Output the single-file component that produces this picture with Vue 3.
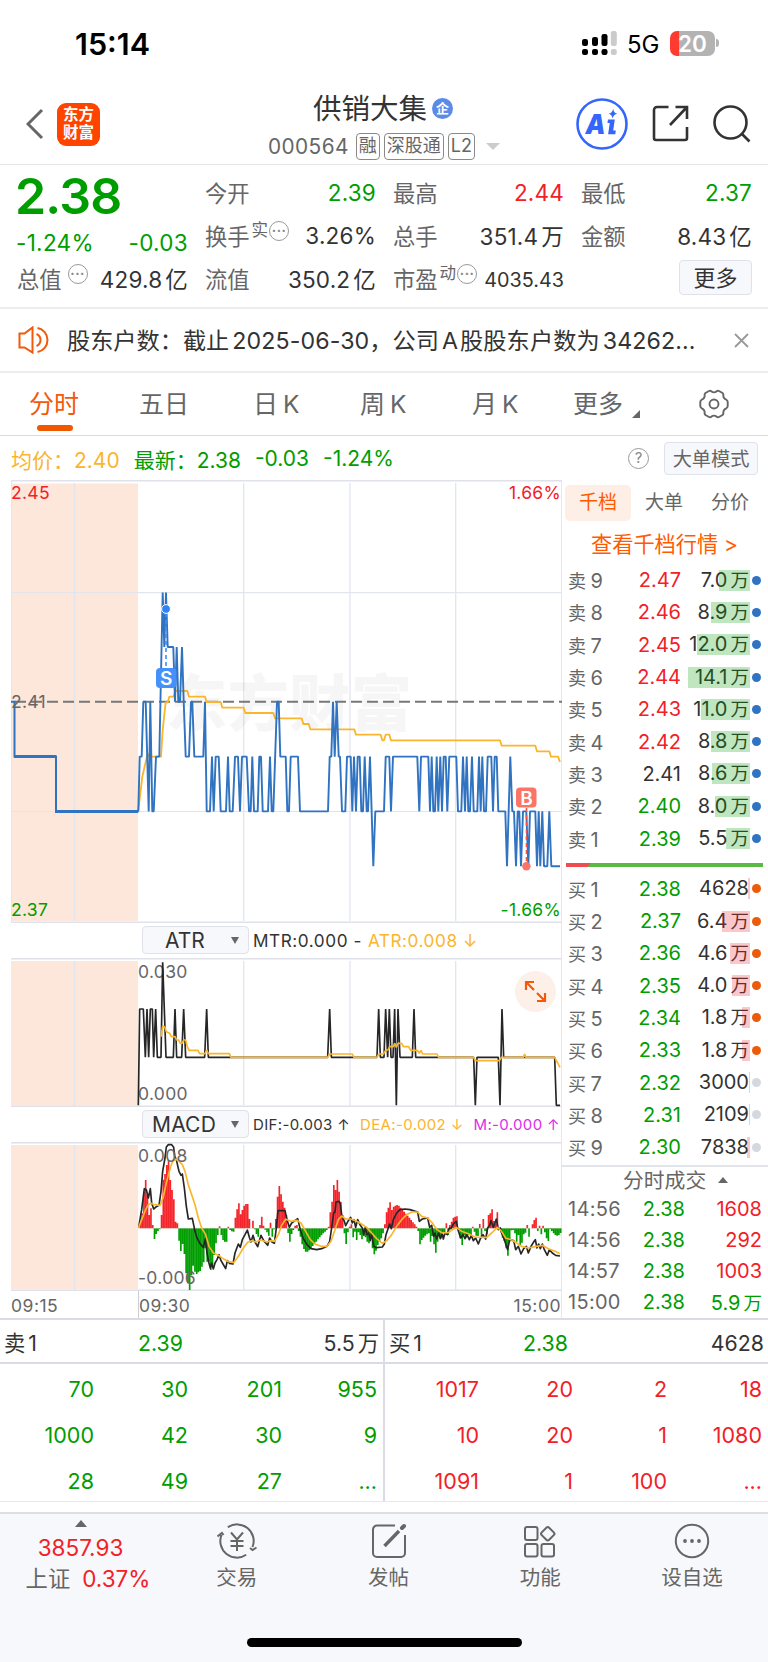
<script setup>
const sells = [
  [9, '2.47', 'r', '7.0', 31], [8, '2.46', 'r', '8.9', 39], [7, '2.45', 'r', '12.0', 53],
  [6, '2.44', 'r', '14.1', 62], [5, '2.43', 'r', '11.0', 49], [4, '2.42', 'r', '8.8', 39],
  [3, '2.41', 'k', '8.6', 38], [2, '2.40', 'g', '8.0', 35], [1, '2.39', 'g', '5.5', 24],
]
const buys = [
  [1, '2.38', '4628', 0, 2, 1], [2, '2.37', '6.4', 1, 28, 1], [3, '2.36', '4.6', 1, 20, 1],
  [4, '2.35', '4.0', 1, 18, 1], [5, '2.34', '1.8', 1, 8, 1], [6, '2.33', '1.8', 1, 8, 1],
  [7, '2.32', '3000', 0, 1, 0], [8, '2.31', '2109', 0, 1, 0], [9, '2.30', '7838', 0, 3, 0],
]
const trades = [['14:56', '1608'], ['14:56', '292'], ['14:57', '1003']]
const sellOrders = ['70', '30', '201', '955', '1000', '42', '30', '9', '28', '49', '27', '...']
const buyOrders = ['1017', '20', '2', '18', '10', '20', '1', '1080', '1091', '1', '100', '...']

const levels = [592.5, 647, 701.8, 756.6, 811.4, 866.2]
const scaleX = (s, origin) => s.split(' ').map((p) => {
  const [x, l] = p.split(':').map(Number)
  return `${(origin + x / 3).toFixed(1)},${levels[l]}`
}).join(' ')
const priceA = scaleX('415:4 419:3 425:3 430:2 437:2 446:4 451:2 457:4 461:4 468:3 478:3 488:0 493:1 498:0 503:1 520:1 525:2 530:1 535:2 540:2 546:1 551:2 557:3 567:3 573:2 577:2 583:3 610:3 615:2 620:4 630:4 636:3 641:4 647:3 656:3 662:4 678:4 684:3 689:4 698:4 705:3 714:3 720:4 726:3 740:3 747:4 752:4 757:3 762:4 773:4 778:3 783:3 788:4 804:4 810:3 815:4 820:4 831:2 836:2', 0)
const priceB = scaleX('1:3 17:3 22:4 27:4 32:3 54:3 60:4 144:4 149:3 154:3 159:2 164:3 170:2 176:3 180:3 186:4 196:4 201:3 212:3 217:4 222:3 228:4 233:3 239:3 244:4 249:4 254:3 260:4 264:4 270:3 280:5 286:4 312:4 317:3 328:3 333:4 339:3 412:3 418:4 423:3 445:3 450:4 455:3 460:4 465:4 470:3 475:4 481:3 486:4 491:3 497:3 502:4 508:3 529:3 534:4 544:4 549:3 555:4 560:3 565:4 570:4 576:3 581:4 592:4 597:3 602:4 607:3 612:4 618:4 623:3 634:3 639:4 644:3 650:3 655:4 676:4 681:5 691:3 697:4 702:4 708:5 713:4 718:4 723:5 729:4 739:4 745:5 750:4 766:4 771:5 776:4 781:5 787:4 792:5 802:5 808:4 814:5 840:5', 280)
const price = priceA + ' ' + priceB

const bars = [0, 20, 45, 110, 145, 100, 40, 60, 10, -32, -17, -8, -3, 40, 146, 163, 190, 205, 145, 115, 87, 20, 15, -37, -68, -47, -77, -135, -165, -185, -140, -112, -130, -137, -132, -128, -115, -102, -60, -100, -100, -125, -110, -80, -45, -20, 6, -20, -35, -40, -40, 5, -5, -9, -10, 32, 57, 75, 42, 55, 68, 73, 73, 28, 0, 23, -3, -17, -25, 10, 35, 8, -4, -12, -22, 17, -25, -3, 28, 95, 127, 102, 80, 62, 40, -14, -40, -17, -5, 8, 10, -8, -25, -48, -62, -70, -70, -66, -60, -53, -47, -40, -33, -27, -21, -15, -10, -5, 5, 48, 80, 130, 115, 145, 110, 80, 40, -15, -47, -12, 5, 12, -27, -10, -35, -12, -20, -33, -23, -27, -40, -45, -30, -60, -78, -67, -50, -40, -30, -15, 12, 48, 62, 78, 55, 65, 68, 70, 68, 62, 58, 50, 44, 38, 32, 25, 18, 12, 5, -8, -48, -35, -28, -22, -18, -15, -40, -23, -48, -73, -40, -20, -30, -12, -12, 15, -20, 10, 20, 32, 35, 36, -8, -30, -50, -20, -30, -20, -20, -28, 5, -10, -22, -23, 13, -23, 28, -8, -18, 40, 45, 57, 22, 15, 48, -5, -12, -28, -38, -60, -82, -40, -6, -5, -15, -40, -20, -50, -43, -18, -13, 10, -25, 0, 12, 25, 32, -8, 8, -18, 8, -12, -30, -38, -3, -8, -15, -20, -22, -20, -14]
const barPath = (sign) => bars.map((h, i) => (h * sign > 0 ? `M${(11 + 5.275 * i).toFixed(1)} 271v${-h}` : '')).join('')
const redBars = barPath(1)
const greenBars = barPath(-1)
</script>

<template>
  <div class="page">
    <div class="status">
      <div class="clock">15:14</div>
      <svg class="signal" width="35" height="24" viewBox="0 0 35 24">
        <g fill="#000">
          <rect x="0" y="8" width="6" height="7" rx="2.2" /><rect x="10" y="6" width="6" height="9" rx="2.2" /><rect x="19.500" y="3" width="6" height="12" rx="2.2" />
          <rect x="0" y="18" width="6" height="6" rx="2.2" /><rect x="10" y="18" width="6" height="6" rx="2.200" /><rect x="19.500" y="18" width="6" height="6" rx="2.200" />
        </g>
        <g fill="#cbcbcb"><rect x="28.800" y="0" width="6" height="15" rx="2.200" /><rect x="28.800" y="18" width="6" height="6" rx="2.200" /></g>
      </svg>
      <div class="net">5G</div>
      <div class="battery"><span>20</span></div>
      <div class="nub"></div>
    </div>

    <header class="header">
      <div class="hleft">
        <svg width="18" height="32" viewBox="0 0 18 32"><path d="M16 2 2 16l14 14" fill="none" stroke="#666" stroke-width="3" /></svg>
        <div class="logo"><span>东方</span><span>财富</span></div>
      </div>
      <div class="hmid">
        <div class="title">供销大集<span class="ent">企</span></div>
        <div class="code"><span class="num">000564</span><span class="tag">融</span><span class="tag">深股通</span><span class="tag">L2</span>
          <svg width="14" height="7"><path d="M0 0h14l-7 7z" fill="#ccc" /></svg>
        </div>
      </div>
      <div class="hright">
        <svg width="52" height="52" viewBox="0 0 52 52">
          <circle cx="26" cy="26" r="24.500" fill="none" stroke="#3566fb" stroke-width="2.600" />
          <text x="9.500" y="35.500" font-size="27" class="ai" textLength="20" lengthAdjust="spacingAndGlyphs">A</text>
          <path d="M32 21.500h6.800l-1.600 11h2.600l-.5 3.700h-7.200l1.700-11.200h-2.400z" fill="#3566fb" />
          <path d="M37.200 10.800q.6 4.500 4.200 5-3.900.6-4.900 4.800-.4-4.200-4.100-4.800 3.900-.6 4.800-5z" fill="#3566fb" />
        </svg>
        <svg width="38" height="38" viewBox="0 0 38 38" fill="none" stroke="#333" stroke-width="2.600"><path d="M16.500 2H5a3 3 0 0 0-3 3v28a2 2 0 0 0 2 2h29a2 2 0 0 0 2-2V22M23.500 2H35v12M35 2 18 20" /></svg>
        <svg width="38" height="38" viewBox="0 0 38 38" fill="none" stroke="#333" stroke-width="2.600"><circle cx="17.500" cy="17.500" r="16" /><path d="m28.500 28.500 8 8" /></svg>
      </div>
    </header>

    <section class="stats">
      <div class="big">
        <div class="last">2.38</div>
        <div class="pair g"><span>-1.24%</span><span>-0.03</span></div>
        <div class="cell row3"><label>总值<b class="dots">···</b></label><span>429.8<i>亿</i></span></div>
      </div>
      <div class="grid">
        <div class="cell"><label>今开</label><span class="g">2.39</span></div>
        <div class="cell"><label>最高</label><span class="r">2.44</span></div>
        <div class="cell"><label>最低</label><span class="g">2.37</span></div>
        <div class="cell"><label>换手<sup>实</sup><b class="dots near">···</b></label><span>3.26%</span></div>
        <div class="cell"><label>总手</label><span>351.4<i>万</i></span></div>
        <div class="cell"><label>金额</label><span>8.43<i>亿</i></span></div>
        <div class="cell"><label>流值</label><span>350.2<i>亿</i></span></div>
        <div class="cell"><label>市盈<sup>动</sup><b class="dots near">···</b></label><span class="small">4035.43</span></div>
        <div class="cell end"><button class="more">更多</button></div>
      </div>
    </section>

    <section class="notice">
      <svg width="32" height="28" viewBox="0 0 32 28" fill="none" stroke="#f3590a" stroke-width="2"><path d="M1.500 7.500h5L14.500 1.500v25l-8-5h-5zM18.500 8a6.500 6.500 0 0 1 0 12M19.500 2a12.200 12.200 0 0 1 0 24" /></svg>
      <p>股东户数：截止<i>2025-06-30</i>，公司<i>A</i><i class="cn">股股东户数为</i><i>34262...</i></p>
      <svg width="15" height="15" viewBox="0 0 15 15"><path d="m1 1 13 13M14 1 1 14" stroke="#999" stroke-width="1.800" /></svg>
    </section>

    <nav class="tabs">
      <span class="on">分时</span><span>五日</span><span>日<i>K</i></span><span>周<i>K</i></span><span>月<i>K</i></span>
      <span class="mt">更多<svg width="8" height="8"><path d="M8 0v8H0z" fill="#666" /></svg></span>
      <svg class="gear" width="30" height="30" viewBox="0 0 30 30" fill="none" stroke="#666" stroke-width="1.900"><path d="M10 2q1.500-.8 2.500.5 2.500 1.800 5 0 1-1.300 2.500-.5l3.500 2q1.200 1 .8 2.700.2 3 3 4 1.400.8 1.400 2.300v4q0 1.500-1.400 2.300-2.800 1-3 4 .4 1.700-.8 2.700l-3.500 2q-1.500.8-2.500-.5-2.500-1.800-5 0-1 1.300-2.500.5l-3.500-2q-1.200-1-.8-2.700-.2-3-3-4Q1.300 18.500 1.300 17v-4q0-1.500 1.400-2.300 2.800-1 3-4Q5.300 5 6.500 4z" /><circle cx="15" cy="15" r="4.500" /></svg>
    </nav>

    <div class="info">
      <span class="y">均价：2.40</span><span class="g">最新：2.38</span><span class="g">-0.03</span><span class="g">-1.24%</span>
      <span class="q">?</span><button>大单模式</button>
    </div>

    <main class="body">
      <div class="charts">
        <svg class="chart" width="551" height="443" viewBox="11 480 551 443">
          <path d="M11 483.500h127v437.500H11z" fill="#fce7da" />
          <g stroke="#e1e5ee" fill="none"><path d="M11 592.700h551M11 811.500h551" stroke-width="1.200" /><path d="M74.500 483v438M243.700 483v438M350 483v438M455.700 483v438" stroke-width="1.300" /><path d="M11.500 923V481" /></g>
          <text x="166" y="726" class="wm" textLength="246">东方财富</text>
          <path d="M11 701.800h551" stroke="#777" stroke-width="2" stroke-dasharray="11 5" stroke-dashoffset="-4" />
          <g transform="translate(0 480) scale(.33333)" fill="none" stroke="#fbb52d" stroke-width="5.500" stroke-linejoin="round">
            <path d="M415 990 427 890 443 820 447 830H483L488 750 497 667H503L508 650H520L527 633H562L567 650H615L620 666H662L667 683H731L736 699H820L825 715H905L910 732H926L931 748H1063L1068 764H1142L1147 781H1152L1157 764H1168L1173 781H1500L1505 797H1606L1611 814H1648L1653 830H1674L1680 846" />
          </g>
          <path d="M11 701.800h3.500v54.800H56v54.800h82.500" fill="none" stroke="#2f73c1" stroke-width="2" />
          <path d="M14 756.600h42M55 811.400h83" stroke="#2f73c1" stroke-width="3" />
          <polyline :points="price" fill="none" stroke="#2f73c1" stroke-width="1.900" stroke-linejoin="bevel" />
          <path d="M166 613v55" stroke="#3d8bff" stroke-width="1.600" stroke-dasharray="4 3" />
          <circle cx="166" cy="609" r="4.400" fill="#2f83f5" stroke="#fff" />
          <rect x="156" y="668" width="20.500" height="20" rx="4" fill="#4690fc" />
          <text x="166.200" y="685" class="mark">S</text>
          <path d="M526.500 808v56" stroke="#f25548" stroke-width="1.600" stroke-dasharray="4 3" />
          <circle cx="526.400" cy="866.300" r="4.200" fill="#fc7467" />
          <rect x="516" y="787.500" width="20.500" height="20" rx="4" fill="#fc7467" />
          <text x="526.400" y="804.500" class="mark">B</text>
          <g class="axis"><text x="11" y="498.500" fill="#f22027">2.45</text><text x="11" y="707.500">2.41</text><text x="11" y="916" fill="#009d00">2.37</text><text x="561" y="498.500" fill="#f22027" text-anchor="end">1.66%</text><text x="561" y="916" fill="#009d00" text-anchor="end">-1.66%</text></g>
        </svg>
        <div class="ind"><div class="drop"><span>ATR</span><u></u></div><span class="i1">MTR:0.000 -</span><span class="i1 y">ATR:0.008 ↓</span></div>
        <svg class="chart" width="551" height="149" viewBox="11 958 551 149">
          <path d="M11 961h127v145H11z" fill="#fce7da" />
          <path d="M74.500 961v145M243.700 961v145M350 961v145M455.700 961v145" stroke="#e1e5ee" stroke-width="1.300" />
          <g class="axis"><text x="138" y="978">0.030</text><text x="138" y="1100">0.000</text></g>
          <g transform="translate(0 920) scale(.33333)" fill="none" stroke-width="5" stroke-linejoin="bevel">
            <path stroke="#262626" d="M415 556 419 267H430L436 412 441 267 446 412 451 267H457L461 412 467 267 472 412H483L488 127 498 412H520L525 267 530 412H545L551 267 557 412H614L620 267 625 412H983L989 267 994 412H1131L1136 267 1141 412H1152L1157 267 1163 412 1168 267 1173 412H1179L1184 267 1189 556 1194 267 1200 412H1237L1242 267 1247 412H1421L1426 556 1431 412H1495L1500 556 1506 267 1511 412H1664L1669 556H1680" />
            <path stroke="#fbb52d" d="M483 350 488 318 494 320 499 335 509 340 514 350H525L530 360H536L541 370H546L551 360H557L562 380 567 391H594L599 401H615L620 390 625 401H688L693 412H983L989 402H1057L1062 412H1131L1136 402H1150L1158 390H1164L1169 380H1180L1184 370 1189 382 1194 370H1205L1210 380H1226L1232 391H1252L1258 400 1263 391 1268 402H1311L1316 412H1421L1426 422H1498L1504 412H1570L1574 402 1578 412H1664L1680 442" />
          </g>
          <circle cx="535.500" cy="991.500" r="20.500" fill="#fdf0e9" />
          <path d="M526 990v-8h8M526.500 982.500l7.500 7.500M545 993v8h-8M544.500 1000.500l-7.500-7.500" fill="none" stroke="#f3590a" stroke-width="2.200" />
        </svg>
        <div class="ind"><div class="drop"><span class="wide">MACD</span><u></u></div><span class="i2">DIF:-0.003 ↑</span><span class="i2 y">DEA:-0.002 ↓</span><span class="i2 p">M:-0.000 ↑</span></div>
        <svg class="chart" width="551" height="149" viewBox="11 1142 551 149">
          <path d="M11 1145h127v144.500H11z" fill="#fce7da" />
          <path d="M74.500 1145v145M243.700 1145v145M350 1145v145M455.700 1145v145" stroke="#e1e5ee" stroke-width="1.300" />
          <g transform="translate(135 1138) scale(.33333)" fill="none" stroke-width="5" stroke-linejoin="round">
            <path :d="redBars" stroke="#f3252a" /><path :d="greenBars" stroke="#009d00" />
            <path d="M11 271H1278" stroke="#c8b9a8" stroke-width="1" />
            <path stroke="#262626" d="M11 268 20 215 28 152 34 155 40 180 46 152 50 195 56 213 64 206 72 202 78 160 83 100 90 60 94 27 100 20 110 20 116 28 119 55 124 65 132 100 138 112 142 108 148 150 154 205 160 243 172 241 180 280 186 300 196 318 205 328 211 303 216 345 221 372 226 390 230 375 235 393 240 375 246 365 252 350 258 368 264 378 272 392 277 368 284 376 294 378 300 345 310 318 316 328 322 305 330 290 337 276 343 298 348 312 354 292 360 312 368 326 373 308 378 292 386 308 398 322 404 300 411 312 418 316 424 270 429 218 450 218 456 245 463 268 470 255 488 242 496 275 504 300 516 320 528 332 545 335 560 332 576 325 584 310 592 255 596 225 600 222 603 192 612 190 616 198 620 230 628 250 632 263 640 248 647 238 652 255 657 245 662 268 668 245 676 262 682 270 686 290 691 268 696 290 701 285 706 308 710 285 716 325 724 329 742 327 748 318 753 290 764 258 769 272 775 245 785 225 795 215 810 213 825 215 848 222 853 250 862 243 878 240 884 268 890 262 896 295 900 285 905 303 911 285 916 302 921 285 925 303 930 285 937 290 943 270 948 272 955 258 964 250 969 275 977 300 984 290 990 302 996 290 1003 305 1009 292 1015 308 1022 300 1030 318 1036 302 1044 290 1052 303 1058 270 1064 262 1068 248 1075 268 1084 243 1090 275 1096 270 1101 288 1108 305 1118 335 1124 305 1136 308 1142 335 1150 325 1158 348 1166 332 1174 325 1180 345 1188 325 1196 312 1201 305 1206 330 1211 318 1216 332 1222 318 1228 335 1237 352 1243 335 1252 345 1262 352 1275 354" />
            <path stroke="#fbb52d" d="M11 268 22 240 32 215 40 200 48 196 58 200 75 202 84 180 94 135 104 95 112 72 122 63 132 70 142 80 150 100 160 140 170 170 180 200 190 240 200 270 212 290 222 325 235 345 250 352 265 362 278 370 296 374 310 355 325 330 338 313 350 308 362 312 378 306 395 312 408 308 418 310 430 290 440 262 452 244 468 250 485 247 498 255 512 280 526 305 540 318 558 325 576 325 588 310 600 275 610 245 620 234 632 243 648 243 665 250 680 258 695 268 710 285 725 302 742 316 755 308 770 290 785 265 800 245 815 230 830 222 848 222 860 235 878 240 892 255 906 275 922 285 940 284 952 275 964 268 980 280 1000 287 1020 297 1045 298 1055 298 1070 285 1087 268 1098 278 1112 300 1130 306 1145 315 1160 325 1180 330 1200 326 1222 322 1240 332 1260 340 1275 347" />
          </g>
          <g class="axis"><text x="138" y="1162">0.008</text><text x="138" y="1284">-0.006</text></g>
        </svg>
        <div class="times"><span>09:15</span><span class="t2">09:30</span><span class="t3">15:00</span></div>
      </div>

      <aside class="side">
        <div class="stabs"><span class="on">千档</span><span>大单</span><span>分价</span></div>
        <div class="look">查看千档行情 <em>&gt;</em></div>
        <div v-for="s in sells" :key="'s' + s[0]" class="lv">
          <span class="nm">卖<i>{{ s[0] }}</i></span><span class="pr" :class="s[2]">{{ s[1] }}</span>
          <span class="qt">{{ s[3] }}<i>万</i><b class="fill gf" :style="{ width: s[4] + 'px' }"></b></span><span class="dot blue"></span>
        </div>
        <div class="ratio"><svg width="197" height="4"><path d="M0 0h197v4H0z" fill="#5bba45" /><path d="M0 0h25l-3.500 4H0z" fill="#ee4c50" /></svg></div>
        <div v-for="b in buys" :key="'b' + b[0]" class="lv">
          <span class="nm">买<i>{{ b[0] }}</i></span><span class="pr g">{{ b[1] }}</span>
          <span class="qt">{{ b[2] }}<i v-if="b[3]">万</i><b class="fill rf" :style="{ width: b[4] + 'px' }"></b></span><span class="dot" :class="b[5] ? 'orange' : 'grey'"></span>
        </div>
        <div class="deals">
          <div class="dh">分时成交<svg width="10" height="6"><path d="M0 6h10L5 0z" fill="#666" /></svg></div>
          <div v-for="(t, i) in trades" :key="i" class="tr"><span>{{ t[0] }}</span><span class="g">2.38</span><span class="r">{{ t[1] }}</span></div>
          <div class="tr"><span>15:00</span><span class="g">2.38</span><span class="g">5.9<i>万</i></span></div>
        </div>
      </aside>
    </main>

    <section class="orders">
      <div class="half">
        <div class="oh"><span>卖<i>1</i></span><span class="g">2.39</span><span>5.5<i>万</i></span></div>
        <div class="og g"><span v-for="(o, i) in sellOrders" :key="i">{{ o }}</span></div>
      </div>
      <div class="half right">
        <div class="oh"><span>买<i>1</i></span><span class="g">2.38</span><span>4628</span></div>
        <div class="og r"><span v-for="(o, i) in buyOrders" :key="i">{{ o }}</span></div>
      </div>
    </section>

    <footer class="foot">
      <div class="index">
        <svg width="12" height="7"><path d="M0 7h12L6 0z" fill="#666" /></svg>
        <div class="r v">3857.93</div>
        <div class="c">上证<span class="r">0.37%</span></div>
      </div>
      <div class="act">
        <svg width="40" height="36" viewBox="0 0 40 36" fill="none" stroke="#666" stroke-width="2"><path d="M10.800 4.300A16.500 16.500 0 0 1 35.500 24M29.200 31.700A16.500 16.500 0 0 1 4.500 12M.500 13.500 5 10l1.500 2M39.500 24.500l-4 2.500-2.500-2M14 9.500l6 7 6-7M20 16.500v11.500M13.500 18h13M13.500 23h13" /></svg>交易
      </div>
      <div class="act">
        <svg width="36" height="36" viewBox="0 0 36 36" fill="none" stroke="#666" stroke-width="2"><path d="M24 2.500H6a4 4 0 0 0-4 4V30a4 4 0 0 0 4 4h24a4 4 0 0 0 4-4V12" /><path d="M13.500 23 28 8" stroke-width="3.400" /><path d="m31 5 2-2" stroke-width="4" stroke-linecap="round" /></svg>发帖
      </div>
      <div class="act">
        <svg width="36" height="36" viewBox="0 0 36 36" fill="none" stroke="#666" stroke-width="2"><rect x="3" y="4" width="12.500" height="13" rx="2" /><rect x="3" y="21" width="12.500" height="12.500" rx="2" /><rect x="19.500" y="21" width="12.500" height="12.500" rx="2" /><rect x="20.500" y="5.500" width="10.500" height="10.500" rx="2" transform="rotate(45 25.750 10.750)" /></svg>功能
      </div>
      <div class="act">
        <svg width="36" height="36" viewBox="0 0 36 36"><circle cx="18" cy="18" r="16.200" fill="none" stroke="#666" stroke-width="2" /><g fill="#666"><circle cx="11" cy="18" r="1.900" /><circle cx="18" cy="18" r="1.900" /><circle cx="25" cy="18" r="1.900" /></g></svg>设自选
      </div>
      <div class="home"></div>
    </footer>
  </div>
</template>

<style>
body { background: #fff; }
</style>
<style scoped>
* { box-sizing: border-box; }
.page { width: 768px; height: 1662px; overflow: hidden; background: #fff; color: #333; font-family: Inter, "Noto Sans CJK SC", sans-serif; display: flex; flex-direction: column; white-space: nowrap; }
i { font-style: normal; margin-left: 3px; }
svg { display: block; flex: none; }
button { font-family: inherit; background: #f7f8fb; border: 1px solid #dfe2ea; border-radius: 4px; padding: 0; }
.r { color: #f22027; } .g { color: #009d00; } .k { color: #333; } .y { color: #fbb52d; } .p { color: #e02be8; }

.status { height: 86px; display: flex; align-items: center; padding-left: 75px; }
.clock { font-size: 30.5px; font-weight: 600; color: #000; width: 507px; padding-top: 2px; }
.signal { margin-top: 1px; }
.net { font-size: 24px; color: #000; margin-left: 10px; width: 43px; padding-top: 3px; }
.battery { width: 45px; height: 25px; border-radius: 7px; background: linear-gradient(90deg, #ff3b30 9px, #b3b3b3 9px); color: #fff; font-size: 22.500px; font-weight: 600; line-height: 25px; text-align: center; margin-top: 1px; }
.nub { width: 3px; height: 8px; background: #b3b3b3; border-radius: 0 3px 3px 0; margin-left: 1px; }

.header { height: 79px; border-bottom: 1px solid #e6e6e6; display: grid; grid-template-columns: 1fr auto 1fr; }
.hleft { display: flex; align-items: center; padding: 0 0 1px 26px; }
.logo { margin-left: 13px; width: 43px; height: 43px; border-radius: 9px; background: #ff4400; color: #fff; font-size: 15.5px; font-weight: 700; line-height: 18px; display: flex; flex-direction: column; align-items: center; justify-content: center; }
.hmid { display: flex; flex-direction: column; align-items: center; padding-top: 1px; }
.title { height: 44px; line-height: 44px; font-size: 28.5px; display: flex; align-items: center; position: relative; left: -1px; }
.ent { width: 21px; height: 21px; border-radius: 50%; background: #5b8ae8; color: #fff; font-size: 13px; font-weight: 700; line-height: 20px; text-align: center; margin-left: 5px; }
.code { display: flex; align-items: center; height: 32px; color: #666; }
.num { font-size: 20.8px; letter-spacing: .4px; margin-right: 7px; }
.tag { border: 1.500px solid #8a8a8a; border-radius: 4px; height: 27px; line-height: 24px; font-size: 18px; padding: 0 2px; margin-right: 4px; }
.code svg { margin-left: 7px; }
.hright { display: flex; align-items: center; justify-content: flex-end; padding: 0 17px 1px 0; gap: 24px; }
.hright svg:last-child { margin-left: -1px; }
.ai { font-family: Inter, sans-serif; font-weight: 900; font-style: italic; fill: #3566fb; }

.stats { height: 145px; border-bottom: 2px solid #ececee; display: flex; padding: 6px 15px 0 17px; }
.big { width: 171px; margin-right: 17px; }
.last { font-size: 50px; font-weight: 600; color: #009d00; height: 52px; line-height: 51px; letter-spacing: -.8px; margin-left: -2px; }
.pair { display: flex; justify-content: space-between; font-size: 22.500px; height: 35px; line-height: 40px; letter-spacing: .3px; margin-left: -1px; }
.grid { flex: 1; display: grid; grid-template-columns: repeat(3, 171px); column-gap: 17px; grid-auto-rows: 43px; }
.cell { display: flex; justify-content: space-between; align-items: center; height: 43px; font-size: 22.5px; }
.cell.row3 { margin-top: -1px; }
.cell span { letter-spacing: .2px; }
.cell label { color: #666; font-size: 22.3px; display: flex; align-items: center; }
.cell sup { font-size: 16.5px; line-height: 16px; margin: -10px 0 0 2px; }
.dots { width: 20px; height: 20px; border: 1.500px solid #999; border-radius: 50%; font-size: 13px; line-height: 16px; letter-spacing: .5px; text-align: center; color: #888; margin: -8px 0 0 6px; }
.dots.near { margin-left: 1px; }
.cell .small { font-size: 19.8px; padding-top: 3px; letter-spacing: 0; }
.cell.end { justify-content: flex-end; }
.more { width: 73px; height: 35px; font-size: 22px; color: #333; line-height: 30px; margin-top: -1px; }

.notice { height: 64px; border-bottom: 2px solid #ececee; display: flex; align-items: center; padding: 0 18px 0 18px; }
.notice p { margin: -2px 0 0 17px; width: 668px; font-size: 23.200px; }
.notice p i { letter-spacing: .1px; }
.notice p .cn { margin-left: 2px; }
.notice svg:last-child { margin-left: -1px; }

.tabs { height: 63px; border-bottom: 1.500px solid #d9dbe2; display: flex; align-items: center; position: relative; color: #666; font-size: 25px; padding-left: 29px; }
.tabs span { width: 110px; line-height: 63px; height: 62px; position: relative; }
.tabs span i { font-size: 24.500px; margin-left: 5px; }
.tabs .on { color: #f3590a; }
.tabs .on::after { content: ""; position: absolute; left: 8px; bottom: 4px; width: 36px; height: 6px; border-radius: 3px; background: #f05800; }
.tabs span:nth-child(2) { width: 114px; } .tabs span:nth-child(3) { width: 107px; } .tabs span:nth-child(4) { width: 112px; } .tabs span:nth-child(5) { width: 101px; }
.tabs .mt { display: flex; align-items: center; width: 126px; }
.mt svg { margin: 19px 0 0 9px; }

.info { height: 44px; display: flex; align-items: center; padding-left: 11px; font-size: 21px; padding-top: 1px; }
.info span { margin-right: 14px; }
.info .q { width: 21px; height: 21px; border: 1.500px solid #999; border-radius: 50%; color: #888; font-size: 15px; line-height: 18px; text-align: center; margin: 0 15px 0 auto; }
.info button { width: 94px; height: 33px; font-size: 19.200px; color: #666; line-height: 28px; margin-right: 10px; }

.body { height: 838px; display: flex; }
.charts { width: 562px; padding-left: 11px; border-right: 1.500px solid #e4e7ef; }
.chart { box-shadow: inset 0 1.500px #dfe2ea, inset 0 -1.500px #dfe2ea; }
.ind { height: 35px; display: flex; align-items: center; padding-left: 131px; }
.drop { flex: none; width: 107px; height: 28px; border: 1.500px solid #dfe2ea; border-radius: 4px; background: #f7f8fb; font-size: 21px; display: flex; align-items: center; padding-right: 9px; margin-right: 4px; }
.drop span { flex: 1; text-align: center; padding-right: 4px; }
.drop .wide { padding-right: 6px; letter-spacing: .2px; }
.drop u { border: 4.500px solid transparent; border-top: 7px solid #666; border-bottom: 0; }
.i1 { font-size: 17.200px; margin-right: 6px; letter-spacing: .55px; } .i2 { font-size: 15px; margin-right: 10px; letter-spacing: .35px; }
.axis { font-family: Inter, sans-serif; font-size: 17.500px; letter-spacing: .3px; fill: #666; }
.wm { font-family: "Noto Sans CJK SC", sans-serif; font-weight: 900; font-size: 61px; fill: #000; opacity: .03; }
.mark { font-family: Inter, sans-serif; font-weight: 600; font-size: 19px; fill: #fff; text-anchor: middle; }
.times { height: 27px; display: flex; font-size: 17.500px; line-height: 29px; letter-spacing: .5px; color: #666; }
.times span:first-child { width: 127px; }
.t2 { border-left: 1.500px solid #ccced4; } .t3 { margin-left: auto; }

.side { width: 206px; font-size: 20px; }
.stabs { height: 42px; display: flex; font-size: 19px; color: #666; padding: 5px 0 0 3px; line-height: 35px; }
.stabs span { width: 66px; text-align: center; height: 36px; border-radius: 5px; }
.stabs .on { background: #fdeee6; color: #ff5a00; }
.look { height: 42px; line-height: 45px; color: #ff5a00; font-size: 21.200px; padding-left: 29px; }
.look em { font-style: normal; }
.lv { height: 32.300px; display: flex; align-items: center; padding-left: 6px; }
.nm { width: 51px; color: #666; font-size: 18px; } .nm i { margin-left: 4.500px; font-size: 20px; }
.pr { width: 62px; text-align: right; }
.qt { width: 69px; text-align: right; position: relative; line-height: 21px; height: 21px; display: flex; justify-content: flex-end; align-items: center; padding-right: 1px; }
.qt i { font-size: 18.500px; }
.fill { position: absolute; right: 0; top: 0; height: 21px; }
.gf { background: rgba(0, 157, 0, .25); } .rf { background: rgba(242, 32, 39, .25); }
.dot { width: 9px; height: 9px; border-radius: 50%; margin-left: 2px; }
.blue { background: #2f73c1; } .orange { background: #ec5b0a; } .grey { background: #d5d8de; }
.ratio { height: 18px; padding: 8px 0 0 4px; }
.deals { border-top: 2px solid #e1e4ea; margin-top: 1.500px; }
.dh { height: 27px; line-height: 27px; font-size: 20.800px; color: #666; display: flex; align-items: center; padding-left: 61px; }
.dh svg { margin-left: 12px; }
.tr { height: 31px; display: flex; align-items: center; padding: 0 6px 0 6px; }
.tr span:nth-child(1) { width: 56px; color: #666; letter-spacing: .3px; } .tr span:nth-child(2) { width: 61px; text-align: right; } .tr span:nth-child(3) { flex: 1; text-align: right; }
.tr i { font-size: 18.500px; }

.orders { height: 184px; border-top: 2px solid #d9dce3; border-bottom: 1.500px solid #e6e8ec; display: flex; }
.half { width: 383px; } .half.right { width: 385px; border-left: 2px solid #d9dce3; }
.oh { height: 44px; border-bottom: 2px solid #d9dce3; display: grid; grid-template-columns: 134px 1fr auto; padding: 0 4px; font-size: 21.300px; line-height: 46px; }
.og { display: grid; grid-template-columns: 89px 94px 94px 95px; grid-auto-rows: 46px; line-height: 50px; font-size: 21.500px; padding-left: 5px; text-align: right; }

.foot { flex: none; height: 150px; margin-top: 10px; background: #f7f8fb; border-top: 2px solid #dddfe4; display: flex; position: relative; padding-top: 9px; }
.index { width: 161px; display: flex; flex-direction: column; align-items: center; font-size: 22.500px; color: #666; margin-top: -3px; }
.index .v { line-height: 28px; height: 28px; margin-top: 7px; }
.c { line-height: 34px; font-size: 22.300px; padding-left: 15px; } .c span { margin-left: 12px; }
.c .r { font-size: 22.500px; }
.act { width: 151.700px; display: flex; flex-direction: column; align-items: center; font-size: 20.500px; color: #666; line-height: 38px; }
.home { position: absolute; left: 247px; top: 124px; width: 275px; height: 9px; border-radius: 5px; background: #000; }
</style>
